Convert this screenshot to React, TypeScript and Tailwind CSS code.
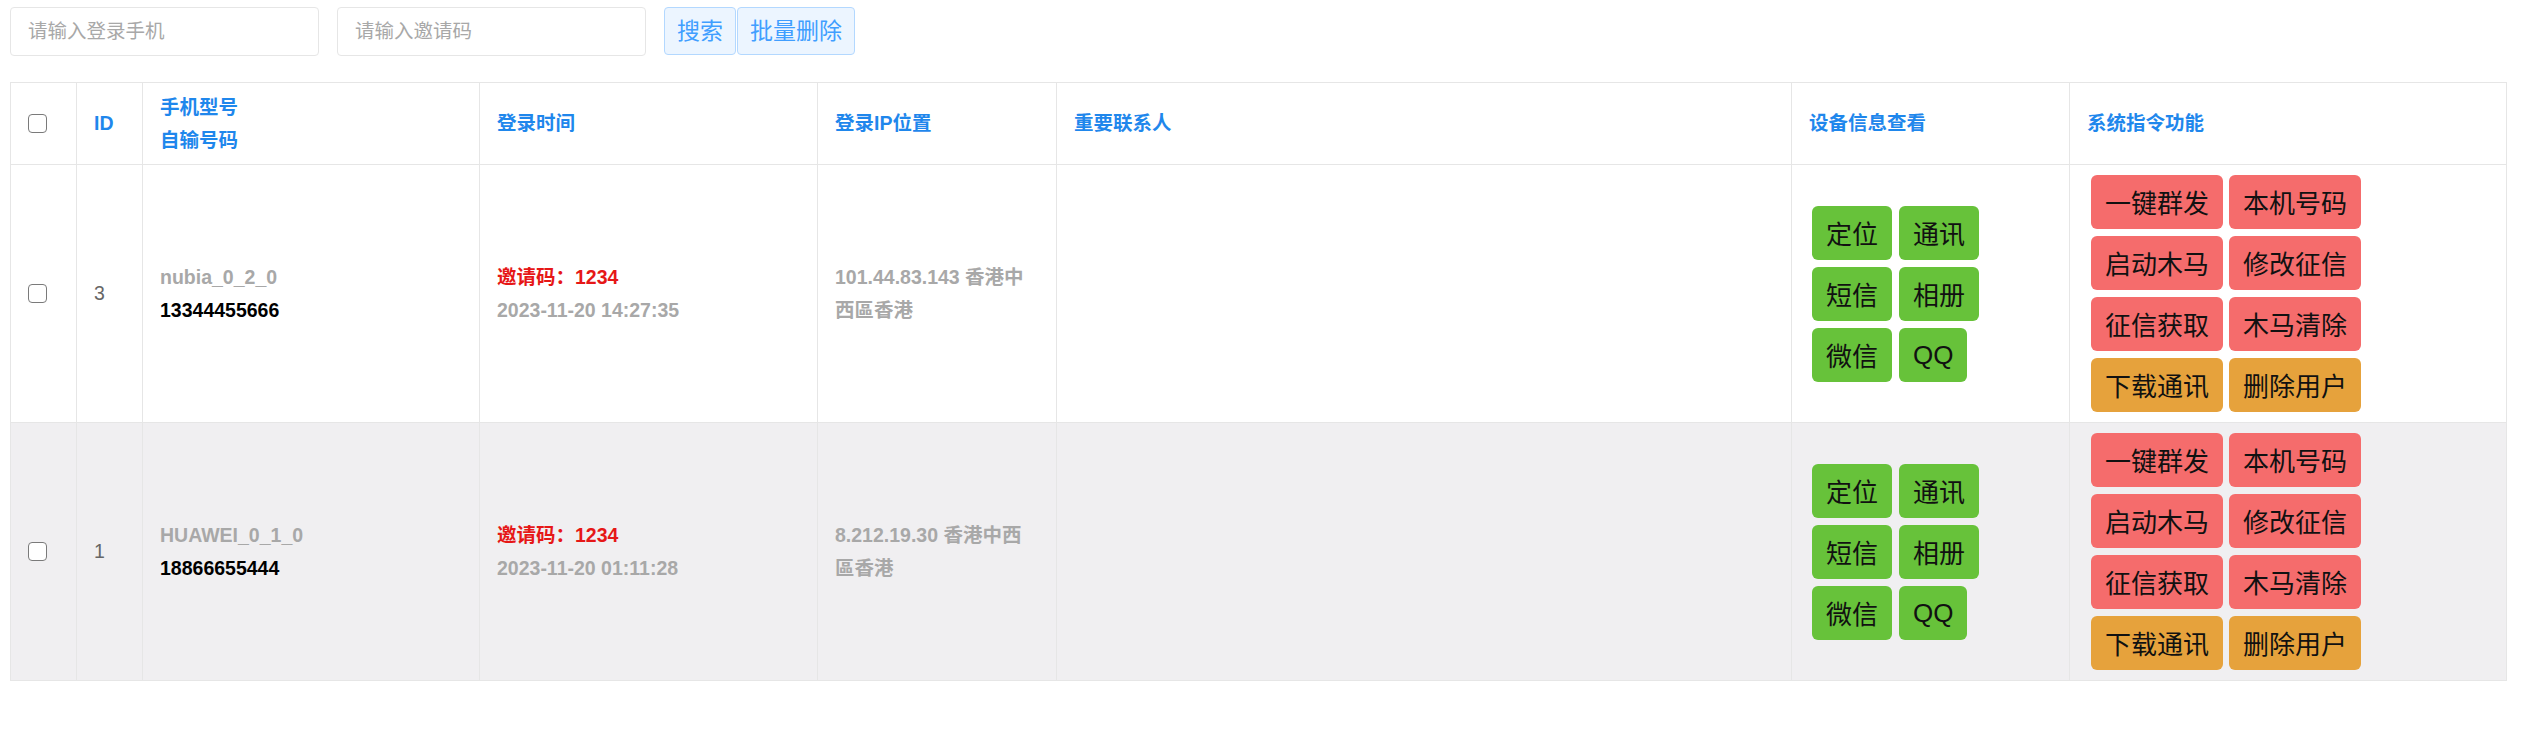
import React from 'react'

type Device = {
  id: number
  model: string
  phone: string
  code: string
  time: string
  ip: string
}

const devices: Device[] = [
  { id: 3, model: 'nubia_0_2_0', phone: '13344455666', code: '1234', time: '2023-11-20 14:27:35', ip: '101.44.83.143 香港中西區香港' },
  { id: 1, model: 'HUAWEI_0_1_0', phone: '18866655444', code: '1234', time: '2023-11-20 01:11:28', ip: '8.212.19.30 香港中西區香港' },
]

const infoButtons = ['定位', '通讯', '短信', '相册', '微信', 'QQ']

const commandButtons = [
  { label: '一键群发', tone: 'red' },
  { label: '本机号码', tone: 'red' },
  { label: '启动木马', tone: 'red' },
  { label: '修改征信', tone: 'red' },
  { label: '征信获取', tone: 'red' },
  { label: '木马清除', tone: 'red' },
  { label: '下载通讯', tone: 'orange' },
  { label: '删除用户', tone: 'orange' },
]

function Checkbox() {
  return (
    <input
      type="checkbox"
      className="block appearance-none w-[19px] h-[19px] border-[1.5px] border-[#7a7a7a] rounded-[4px] bg-white"
    />
  )
}

const th = 'border border-[#e6e6e6] px-[17px] text-left align-middle font-bold text-[19.5px] leading-[33px] text-[#1f87ec]'
const td = 'border border-[#e6e6e6] px-[17px] align-middle text-[19.5px] leading-[33px]'

export default function App() {
  return (
    <div
      className="min-h-[745px] bg-white px-[10px] pt-[7px]"
      style={{ fontFamily: '"Liberation Sans", "Noto Sans CJK SC", sans-serif' }}
    >
      {/* search bar */}
      <div className="flex items-start gap-[18px]">
        <input
          placeholder="请输入登录手机"
          className="w-[309px] h-[49px] border border-[#e6e6e6] rounded-[4px] bg-white px-[17px] text-[19.5px] text-[#333] placeholder:text-[#a8a8a8] outline-none"
        />
        <input
          placeholder="请输入邀请码"
          className="w-[309px] h-[49px] border border-[#e6e6e6] rounded-[4px] bg-white px-[17px] text-[19.5px] text-[#333] placeholder:text-[#a8a8a8] outline-none"
        />
        <div className="flex gap-[1px]">
          <button className="h-[48px] px-[12px] border border-[#b3d8ff] bg-[#ecf5ff] rounded-[4px] text-[23px] text-[#409eff]">
            搜索
          </button>
          <button className="h-[48px] px-[12px] border border-[#b3d8ff] bg-[#ecf5ff] rounded-[4px] text-[23px] text-[#409eff]">
            批量删除
          </button>
        </div>
      </div>

      <table className="mt-[26px] w-[2496px] table-fixed border-collapse">
        <colgroup>
          <col className="w-[66px]" />
          <col className="w-[66px]" />
          <col className="w-[337px]" />
          <col className="w-[338px]" />
          <col className="w-[239px]" />
          <col className="w-[735px]" />
          <col className="w-[278px]" />
          <col className="w-[437px]" />
        </colgroup>
        <thead>
          <tr className="h-[82px]">
            <th className={th}>
              <Checkbox />
            </th>
            <th className={th}>ID</th>
            <th className={th}>
              手机型号
              <br />
              自输号码
            </th>
            <th className={th}>登录时间</th>
            <th className={th}>登录IP位置</th>
            <th className={th}>重要联系人</th>
            <th className={th}>设备信息查看</th>
            <th className={th}>系统指令功能</th>
          </tr>
        </thead>
        <tbody>
          {devices.map((d, i) => (
            <tr key={d.id} className={i % 2 === 1 ? 'h-[258px] bg-[#f0eff1]' : 'h-[258px] bg-white'}>
              <td className={td}>
                <Checkbox />
              </td>
              <td className={`${td} font-normal text-[#666]`}>{d.id}</td>
              <td className={`${td} font-bold`}>
                <div className="text-[#a8a8a8]">{d.model}</div>
                <div className="text-black">{d.phone}</div>
              </td>
              <td className={`${td} font-bold`}>
                <div className="text-[#e61717]">邀请码：{d.code}</div>
                <div className="text-[#a8a8a8]">{d.time}</div>
              </td>
              <td className={`${td} font-bold text-[#a8a8a8]`}>
                <div className="w-[192px] break-all">{d.ip}</div>
              </td>
              <td className={td}></td>
              <td className={`${td} pl-[20px]`}>
                <div className="grid grid-cols-[auto_auto] w-fit justify-items-start gap-x-[7px] gap-y-[7px]">
                  {infoButtons.map((b) => (
                    <button
                      key={b}
                      className="h-[54px] px-[14px] rounded-[6px] bg-[#67c23a] text-[26px] leading-none text-[#111]"
                      style={{ fontFamily: b === 'QQ' ? '"Liberation Sans", sans-serif' : '"Noto Sans CJK SC", sans-serif' }}
                    >
                      {b}
                    </button>
                  ))}
                </div>
              </td>
              <td className={`${td} pl-[21px]`}>
                <div className="grid grid-cols-[auto_auto] w-fit gap-x-[6px] gap-y-[7px]">
                  {commandButtons.map((b) => (
                    <button
                      key={b.label}
                      className={`h-[54px] px-[14px] rounded-[6px] text-[26px] leading-none text-[#111] ${
                        b.tone === 'red' ? 'bg-[#f56c6c]' : 'bg-[#e6a23c]'
                      }`}
                      style={{ fontFamily: '"Noto Sans CJK SC", sans-serif' }}
                    >
                      {b.label}
                    </button>
                  ))}
                </div>
              </td>
            </tr>
          ))}
        </tbody>
      </table>
    </div>
  )
}
